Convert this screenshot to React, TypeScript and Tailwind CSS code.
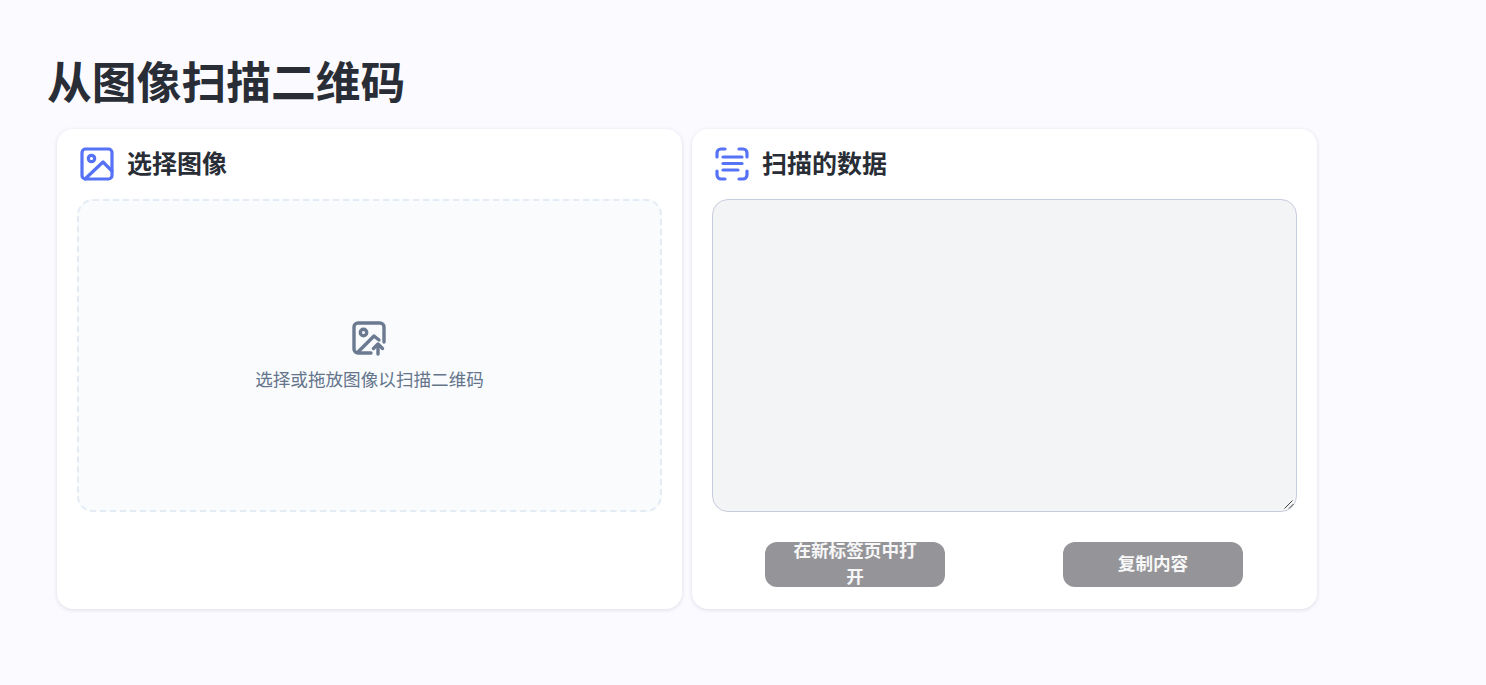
import React from "react";

const font = { fontFamily: '"Inter","Noto Sans CJK SC","Noto Sans",sans-serif' };

function ImageIcon() {
  return (
    <svg width="36" height="36" viewBox="0 0 36 36" fill="none" stroke="#5672f6" strokeWidth="3.2" strokeLinecap="round" strokeLinejoin="round">
      <rect x="3" y="3" width="30" height="30" rx="3.5" />
      <circle cx="12.5" cy="12.5" r="3.2" />
      <path d="M6 33 L24 16 L33 25" />
    </svg>
  );
}

function ScanIcon() {
  return (
    <svg width="36" height="36" viewBox="0 0 36 36" fill="none" stroke="#5672f6" strokeWidth="3.2" strokeLinecap="round" strokeLinejoin="round">
      <path d="M3 11 V7 a4 4 0 0 1 4 -4 h4" />
      <path d="M25 3 h4 a4 4 0 0 1 4 4 v4" />
      <path d="M3 25 v4 a4 4 0 0 0 4 4 h4" />
      <path d="M25 33 h4 a4 4 0 0 0 4 -4 v-4" />
      <path d="M9 11 H28" />
      <path d="M9 17.5 H28" />
      <path d="M9 24 H24" />
    </svg>
  );
}

function UploadIcon() {
  return (
    <svg className="-ml-[2px]" width="36" height="36" viewBox="0 0 36 36" fill="none" stroke="#6b7a90" strokeWidth="3.4" strokeLinecap="round" strokeLinejoin="round">
      <path d="M20 33 H7 a4 4 0 0 1 -4 -4 V7 a4 4 0 0 1 4 -4 H29 a4 4 0 0 1 4 4 V22" />
      <circle cx="12.5" cy="12.5" r="3.2" />
      <path d="M7 32 L23 16 L28 20" />
      <path d="M27 34 V25" />
      <path d="M22.5 28.5 L27 24 L31.5 28.5" />
    </svg>
  );
}

export default function App() {
  return (
    <div className="min-h-[685px] bg-[#fafaff] pl-[48px] pt-[49px] text-[#292d36]" style={font}>
      <h1 className="text-[44.8px] leading-[68px] font-bold m-0 h-[80px] -ml-[1px] whitespace-nowrap">从图像扫描二维码</h1>
      <div className="grid grid-cols-[625px_625px] gap-[10px] ml-[9px]">
        <section className="h-[480px] bg-white rounded-[16px] shadow-[0_1px_4px_rgba(40,50,80,0.14)] p-[20px] flex flex-col">
          <header className="flex items-center gap-[12px] h-[50px] pl-[2px] -mt-[10px] mb-[10px] text-[25px] font-bold leading-none">
            <ImageIcon />
            <span>选择图像</span>
          </header>
          <div className="h-[313px] pb-[2px] rounded-[16px] border-2 border-dashed border-[#e3ebf5] bg-[#f9fbfd] flex flex-col items-center justify-center gap-[13px]">
            <UploadIcon />
            <p className="text-[17.6px] leading-[21px] text-[#64748b]">选择或拖放图像以扫描二维码</p>
          </div>
        </section>
        <section className="h-[480px] bg-white rounded-[16px] shadow-[0_1px_4px_rgba(40,50,80,0.14)] p-[20px] flex flex-col">
          <header className="flex items-center gap-[12px] h-[50px] pl-[2px] -mt-[10px] mb-[10px] text-[25px] font-bold leading-none">
            <ScanIcon />
            <span>扫描的数据</span>
          </header>
          <div className="relative h-[313px]">
            <textarea readOnly className="block h-full w-full rounded-[16px] border border-[#c8cddd] bg-[#f3f4f6] outline-none resize-none" />
            <svg className="absolute right-[2px] bottom-[2px]" width="11" height="11" viewBox="0 0 11 11" fill="none" stroke="#444" strokeWidth="1">
              <path d="M0.5 9.5 L8.5 1.5" />
              <path d="M5 9.5 L9.5 5" />
            </svg>
          </div>
          <div className="grid grid-cols-[286px_286px] gap-[12px] mt-[30px]">
            <button className="justify-self-center w-[180px] h-[45px] rounded-[12px] bg-[#959599] text-[#f7f7f8] text-[17.6px] font-bold leading-[26px] px-[24px] pb-[1px] flex items-center justify-center overflow-hidden text-center">
              在新标签页中打开
            </button>
            <button className="justify-self-center w-[180px] h-[45px] rounded-[12px] bg-[#959599] text-[#f7f7f8] text-[17.6px] font-bold leading-[26px] px-[24px] pb-[1px] flex items-center justify-center overflow-hidden text-center">
              复制内容
            </button>
          </div>
        </section>
      </div>
    </div>
  );
}
